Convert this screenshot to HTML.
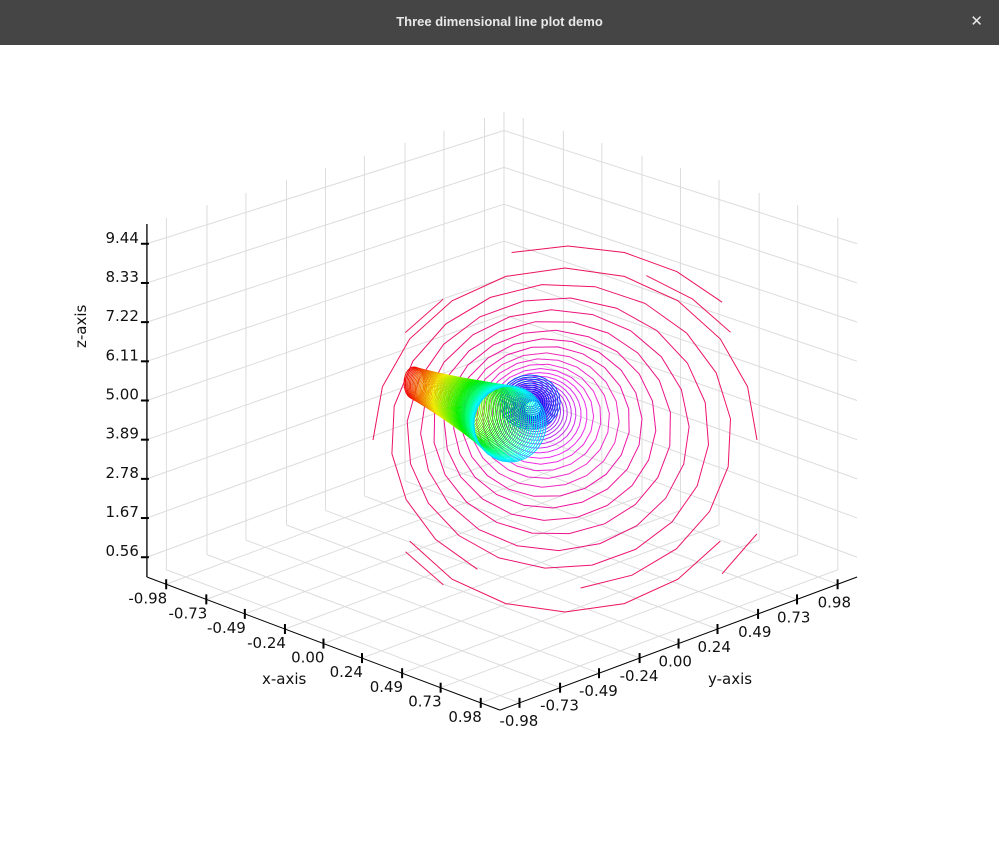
<!DOCTYPE html>
<html><head><meta charset="utf-8"><style>
html,body{margin:0;padding:0;width:999px;height:844px;overflow:hidden;background:#fff;font-family:"Liberation Sans","DejaVu Sans",sans-serif}
#bar{position:absolute;left:0;top:0;width:999px;height:45px;background:#454545;color:#e8e8e8;font-size:13px;font-weight:bold;line-height:44px;text-align:center}
#x{position:absolute;right:16px;top:0;font-size:15px}
svg{position:absolute;left:0;top:0}
svg text{font-family:"DejaVu Sans","Liberation Sans",sans-serif;font-size:15px;fill:#111}
</style></head><body>
<div id="bar">Three dimensional line plot demo<span id="x">✕</span></div>
<svg id="s" width="999" height="844" xmlns="http://www.w3.org/2000/svg">
<g id="grid" stroke="#dcdcdc" stroke-width="1" fill="none"></g>
<g id="curve" fill="none" stroke-width="1"></g>
<g id="axes" stroke="#000" fill="none"></g>
<g id="lab"></g>
<text x="0" y="0" transform="translate(86,348) rotate(-90)">z-axis</text>
<text x="262" y="684">x-axis</text>
<text x="708" y="684">y-axis</text>
</svg>
<script>
var NS="http://www.w3.org/2000/svg";var R=1.1;
function P(x,y,z){var d=(y-x)/(2*R),sz=35.3-2.1*d;return [502+160.5*x+162.3*y,577+60.5*x-60.5*y-z*sz];}
function line(g,a,b,attr){var e=document.createElementNS(NS,"line");e.setAttribute("x1",a[0]);e.setAttribute("y1",a[1]);e.setAttribute("x2",b[0]);e.setAttribute("y2",b[1]);for(var k in attr)e.setAttribute(k,attr[k]);document.getElementById(g).appendChild(e);}
function txt(x,y,s,anchor){var e=document.createElementNS(NS,"text");e.setAttribute("x",x);e.setAttribute("y",y);if(anchor)e.setAttribute("text-anchor",anchor);e.textContent=s;document.getElementById("lab").appendChild(e);}
var T=[-0.98,-0.73,-0.49,-0.24,0,0.24,0.49,0.73,0.98],TL=["-0.98","-0.73","-0.49","-0.24","0.00","0.24","0.49","0.73","0.98"];
var Z=[0.56,1.67,2.78,3.89,5.00,6.11,7.22,8.33,9.44],ZL=["0.56","1.67","2.78","3.89","5.00","6.11","7.22","8.33","9.44"];
for(var i=0;i<9;i++){var t=T[i];
 line("grid",P(-R,t,0),P(-R,t,10));line("grid",P(t,R,0),P(t,R,10));
 line("grid",P(t,-R,0),P(t,R,0));line("grid",P(-R,t,0),P(R,t,0));
 var z=Z[i];line("grid",P(-R,-R,z),P(-R,R,z));line("grid",P(-R,R,z),P(R,R,z));}
line("grid",P(-R,R,0),P(-R,R,10));
var cv=document.getElementById("curve");
function poly(pts,col){var e=document.createElementNS(NS,"polyline");e.setAttribute("points",pts.map(function(p){return p[0].toFixed(1)+","+p[1].toFixed(1)}).join(" "));e.setAttribute("stroke",col);cv.appendChild(e);}
function ring(cx,cy,rx,ry,seg,off,col,keep){var pts=[];for(var j=0;j<=seg;j++){var f=j/seg*2*Math.PI;var a=f+off;
 if(keep&&!keep.some(function(g){return f>=g[0]&&f<=g[1]})){if(pts.length>1)poly(pts,col);pts=[];continue;}
 pts.push([cx+rx*Math.cos(a),cy+ry*Math.sin(a)]);}if(pts.length>1)poly(pts,col);}
// outer fragments
ring(568,438,218,192,24,0,"hsl(340,85%,50%)",[[4.4,5.5],[0.35,1.0],[2.0,2.25]]);
ring(568,442,205,180,24,0.13,"hsl(340,85%,52%)",[[4.95,5.7],[0.55,1.0],[2.05,2.5],[3.6,4.0]]);
// rings geometric
for(var k=0;k<32;k++){var r=Math.pow(0.885,k);
 var cx=532+33*r,cy=408+32*r,rx=4+188*r,ry=4+168*r;
 var h=k<8?340-k*3:(k<18?316-(k-8)*4:276-(k-18)*2.5);
 var col="hsl("+h+",85%,"+(k<8?50:55)+"%)";
 var keep=null;
 if(k==0)keep=[[0,0.25],[0.5,2.6],[2.9,6.3]];
 if(k==1)keep=[[0,1.5],[1.7,6.3]];
 ring(cx,cy,rx,ry,k<12?20:30,k*0.2,col,keep);}
// dense blue core
for(var k=0;k<12;k++){ring(530,402,6+k*2.2,5+k*2,24,0,"hsl("+(245-k*2)+",95%,52%)");}
// tube from red end to disk
var M=70;
for(var k=0;k<M;k++){var s=k/(M-1);
 var cx=414+(510-414)*s,cy=383+(424-383)*s,r=16+(38-16)*Math.pow(s,1.2);
 var h=s<0.85?(s/0.85)*150:150+(s-0.85)/0.15*40;
 var fx=0.62+0.33*Math.pow(s,3);
 ring(cx,cy,r*fx,r,28,0,"hsl("+h+",100%,"+(s>0.8?50:47)+"%)");}
line("axes",P(-R,-R,0),P(-R,-R,10),{"stroke-width":1.3});
line("axes",P(-R,-R,0),P(R,-R,0),{"stroke-width":1});
line("axes",P(R,-R,0),P(R,R,0),{"stroke-width":1});
for(var i=0;i<9;i++){
 var p=P(-R,-R,Z[i]);line("axes",[p[0]-6,p[1]],[p[0]+2,p[1]],{"stroke-width":2});txt(p[0]-8,p[1]-1,ZL[i],"end");
 var q=P(T[i],-R,0);line("axes",[q[0],q[1]-5],[q[0],q[1]+5],{"stroke-width":2});txt(q[0]+1,q[1]+19,TL[i],"end");
 var w=P(R,T[i],0);line("axes",[w[0],w[1]-5],[w[0],w[1]+5],{"stroke-width":2});txt(w[0]-20,w[1]+23,TL[i]);}
</script>
</body></html>
